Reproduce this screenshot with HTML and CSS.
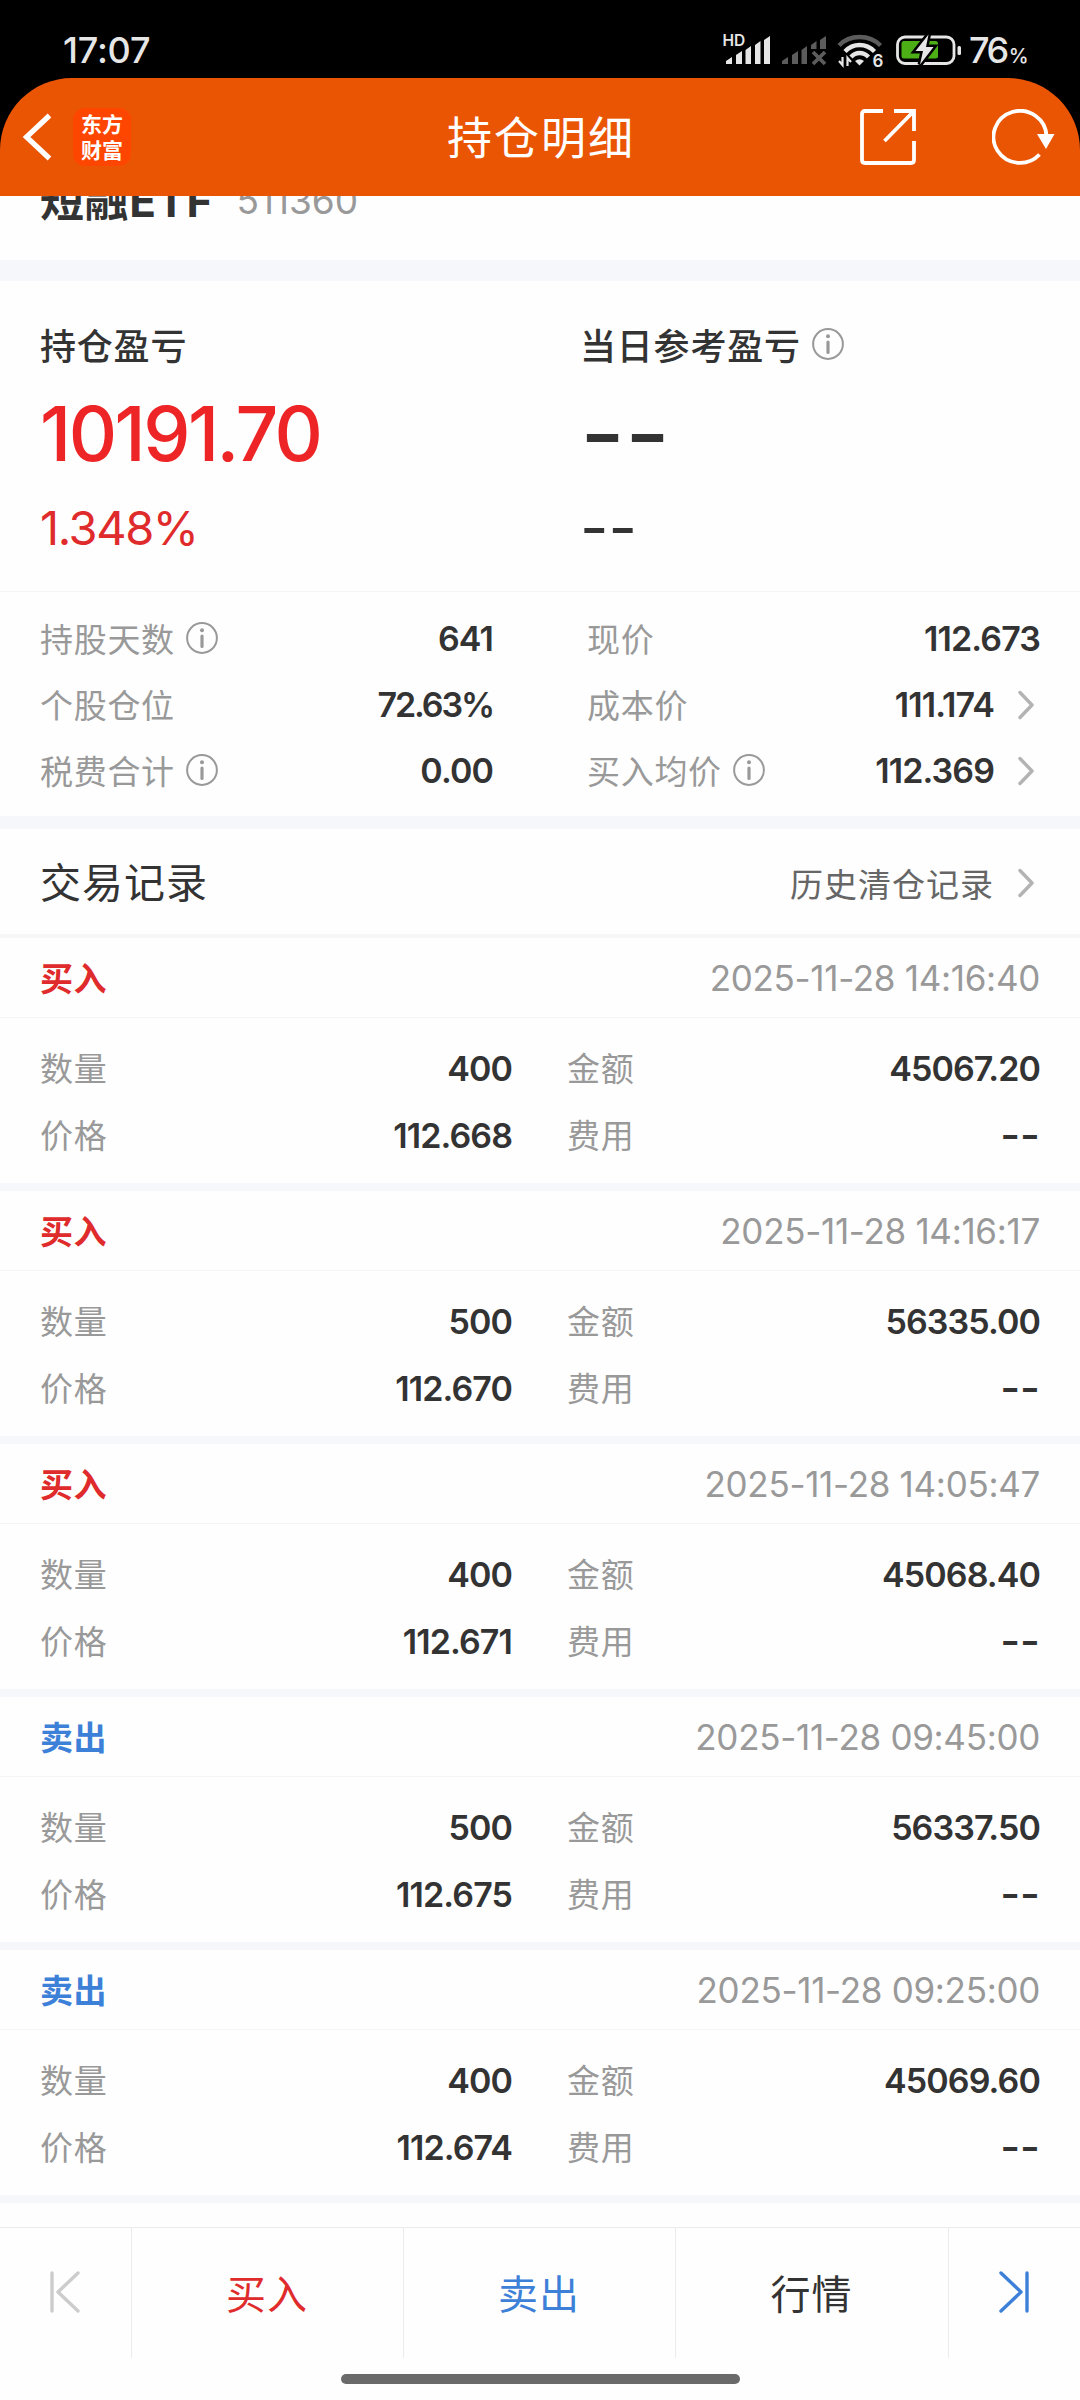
FILE: index.html
```
<!DOCTYPE html>
<html lang="zh-CN">
<head>
    <meta charset="UTF-8">
    <meta name="viewport" content="width=device-width, initial-scale=1.0">
    <title>持仓明细</title>
    <link rel="stylesheet" href="styles.css">
</head>
<body>
    <!-- shared icons -->
    <svg class="sprite" width="0" height="0">
        <symbol id="info" viewBox="0 0 32 32">
            <circle cx="16" cy="16" r="14.9" fill="none" stroke="#999" stroke-width="2"/>
            <circle cx="16" cy="8.3" r="2" fill="#999"/>
            <path d="M16 14v10.5" stroke="#999" stroke-width="3.2" stroke-linecap="round"/>
        </symbol>
        <symbol id="more" viewBox="0 0 16 30">
            <path d="M2 2.500L14 15L2 27.500" fill="none" stroke="#b3b3b3" stroke-width="3.400" stroke-linecap="round" stroke-linejoin="round"/>
        </symbol>
    </svg>

    <div class="statusbar">
        <div class="time">17:07</div>
        <svg class="signals" width="240" height="40" viewBox="722 30 240 40">
            <text x="722.500" y="46" class="hd">HD</text>
            <g fill="#e6e6e6">
                <path d="M726 61l6-4v7h-6zM736 55l6-4v13h-6zM745.500 50l5.500-4v18h-5.500zM755 45l5.500-4v23H755zM764 40l6-4v28h-6z"/>
            </g>
            <g fill="#5c5c5c">
                <path d="M782 61l6-4v7h-6zM792 55l6-4v13h-6zM801.500 50l5.500-4v18h-5.500zM811 45l5.500-4v8H811zM820 40l6-4v13h-6z"/>
                <path d="M813 52l12 12M825 52l-12 12" stroke="#5c5c5c" stroke-width="3.800"/>
            </g>
            <g fill="none" stroke-width="4.300">
                <path d="M839 45.500Q847 37 859.600 37T880.500 45.500" stroke="#5c5c5c"/>
                <path d="M845 51.500Q851 45 859.600 45T874.500 51.500" stroke="#e6e6e6"/>
                <path d="M851 57Q854.500 53 859.600 53T868.500 57" stroke="#e6e6e6"/>
            </g>
            <path d="M855 61q4.500-3.500 9 0l-4.500 4.500z" fill="#e6e6e6"/>
            <path d="M842.500 57v8l-3.500-4M847.500 66v-8l3.500 4" fill="none" stroke="#e6e6e6" stroke-width="2.200"/>
            <text x="872.500" y="67" class="six">6</text>
            <rect x="897.500" y="37" width="56.500" height="26.500" rx="7.500" fill="none" stroke="#e6e6e6" stroke-width="2.800"/>
            <rect x="901.500" y="41" width="36.500" height="17.500" rx="2.500" fill="#4caf16"/>
            <path class="bolt" d="M928.500 34.500L915.500 51h7.500l-3 13.500L933.500 47H926z"/>
            <rect x="957.500" y="46" width="3.500" height="9" rx="1.500" fill="#e6e6e6"/>
        </svg>
        <div class="battery">76<span>%</span></div>
    </div>

    <div class="header">
        <div class="header_left">
            <svg width="32" height="52" viewBox="0 0 32 52"><path d="M27.500 4.500L4.500 26L27.500 47.500" fill="none" stroke="#fff" stroke-width="5.200"/></svg>
            <div class="logo">东方<br>财富</div>
        </div>
        <div class="title">持仓明细</div>
        <div class="header_right">
            <svg width="56" height="56" viewBox="0 0 56 56">
                <path d="M23 2H5Q2 2 2 5V51Q2 54 5 54H51Q54 54 54 51V32M34 2H54V22M54 2L24.500 32" fill="none" stroke="#fff" stroke-width="3.800"/>
            </svg>
            <svg class="refresh" width="64" height="56" viewBox="0 0 64 56">
                <path d="M54.500 27A26.500 26 0 1 0 47.500 45.500" fill="none" stroke="#fff" stroke-width="3.800"/>
                <path d="M45 25h17.500l-8.500 15z" fill="#fff"/>
            </svg>
        </div>
    </div>

    <div class="stock">
        <span class="stock_name">短融ETF</span>
        <span class="stock_code">511360</span>
    </div>

    <div class="profit">
        <div class="profit_col">
            <div class="profit_label">持仓盈亏</div>
            <div class="profit_big red">10191.70</div>
            <div class="profit_small red">1.348%</div>
        </div>
        <div class="profit_col">
            <div class="profit_label">当日参考盈亏<svg class="info"><use href="#info"/></svg></div>
            <div class="profit_big dash">--</div>
            <div class="profit_small dash">--</div>
        </div>
    </div>

    <div class="detail">
        <div class="detail_col">
            <div class="row"><span class="label">持股天数<svg class="info"><use href="#info"/></svg></span><span class="value">641</span></div>
            <div class="row"><span class="label">个股仓位</span><span class="value percent">72.63%</span></div>
            <div class="row"><span class="label">税费合计<svg class="info"><use href="#info"/></svg></span><span class="value">0.00</span></div>
        </div>
        <div class="detail_col">
            <div class="row"><span class="label">现价</span><span class="value">112.673</span></div>
            <div class="row"><span class="label">成本价</span><span class="value">111.174<svg class="more"><use href="#more"/></svg></span></div>
            <div class="row"><span class="label">买入均价<svg class="info"><use href="#info"/></svg></span><span class="value">112.369<svg class="more"><use href="#more"/></svg></span></div>
        </div>
    </div>

    <div class="records_head">
        <div class="records_title">交易记录</div>
        <div class="records_link">历史清仓记录<svg class="more"><use href="#more"/></svg></div>
    </div>

    <div class="record">
        <div class="record_head"><span class="type buy">买入</span><span class="date">2025-11-28 14:16:40</span></div>
        <div class="record_body">
            <div class="row"><span class="label">数量</span><span class="value">400</span></div>
            <div class="row"><span class="label">金额</span><span class="value">45067.20</span></div>
            <div class="row"><span class="label">价格</span><span class="value">112.668</span></div>
            <div class="row"><span class="label">费用</span><span class="value dash">--</span></div>
        </div>
    </div>
    <div class="record">
        <div class="record_head"><span class="type buy">买入</span><span class="date">2025-11-28 14:16:17</span></div>
        <div class="record_body">
            <div class="row"><span class="label">数量</span><span class="value">500</span></div>
            <div class="row"><span class="label">金额</span><span class="value">56335.00</span></div>
            <div class="row"><span class="label">价格</span><span class="value">112.670</span></div>
            <div class="row"><span class="label">费用</span><span class="value dash">--</span></div>
        </div>
    </div>
    <div class="record">
        <div class="record_head"><span class="type buy">买入</span><span class="date">2025-11-28 14:05:47</span></div>
        <div class="record_body">
            <div class="row"><span class="label">数量</span><span class="value">400</span></div>
            <div class="row"><span class="label">金额</span><span class="value">45068.40</span></div>
            <div class="row"><span class="label">价格</span><span class="value">112.671</span></div>
            <div class="row"><span class="label">费用</span><span class="value dash">--</span></div>
        </div>
    </div>
    <div class="record">
        <div class="record_head"><span class="type sell">卖出</span><span class="date">2025-11-28 09:45:00</span></div>
        <div class="record_body">
            <div class="row"><span class="label">数量</span><span class="value">500</span></div>
            <div class="row"><span class="label">金额</span><span class="value">56337.50</span></div>
            <div class="row"><span class="label">价格</span><span class="value">112.675</span></div>
            <div class="row"><span class="label">费用</span><span class="value dash">--</span></div>
        </div>
    </div>
    <div class="record">
        <div class="record_head"><span class="type sell">卖出</span><span class="date">2025-11-28 09:25:00</span></div>
        <div class="record_body">
            <div class="row"><span class="label">数量</span><span class="value">400</span></div>
            <div class="row"><span class="label">金额</span><span class="value">45069.60</span></div>
            <div class="row"><span class="label">价格</span><span class="value">112.674</span></div>
            <div class="row"><span class="label">费用</span><span class="value dash">--</span></div>
        </div>
    </div>

    <div class="tabbar">
        <div class="tab tab_arrow">
            <svg width="30" height="42" viewBox="0 0 30 42"><path d="M2 2V40M28 2L8 21L28 40" fill="none" stroke="#ccc" stroke-width="3.400" stroke-linecap="round" stroke-linejoin="round"/></svg>
        </div>
        <div class="tab buy">买入</div>
        <div class="tab sell">卖出</div>
        <div class="tab">行情</div>
        <div class="tab tab_arrow">
            <svg width="30" height="42" viewBox="0 0 30 42"><path d="M28 2V40M2 2L22 21L2 40" fill="none" stroke="#3d80d8" stroke-width="3.400" stroke-linecap="round" stroke-linejoin="round"/></svg>
        </div>
    </div>
    <div class="home"></div>
</body>
</html>
```
FILE: styles.css
```
* {
    box-sizing: border-box;
}
body {
    margin: 0;
    width: 1080px;
    height: 2400px;
    overflow: hidden;
    background: #fefefe;
    color: #333;
    font-family: Inter, "Noto Sans CJK SC", sans-serif;
    display: flex;
    flex-direction: column;
}
body > div {
    flex-shrink: 0;
}
.sprite {
    position: absolute;
}
.red, .buy {
    color: #df2b2b;
}
.sell {
    color: #3d80d8;
}

/* status bar */
.statusbar {
    height: 78px;
    background: #000;
    color: #e6e6e6;
    display: flex;
    align-items: center;
    padding: 22px 0 0 63px;
    line-height: 56px;
    font-size: 36px;
    font-weight: 500;
}
.time {
    width: 659px;
    letter-spacing: -0.2px;
}
.signals {
    display: block;
}
.hd {
    font-size: 15.500px;
    font-weight: 600;
    fill: #e6e6e6;
}
.six {
    font-size: 17px;
    font-weight: 600;
    fill: #e6e6e6;
}
.bolt {
    fill: #e6e6e6;
    stroke: #000;
    stroke-width: 5px;
    paint-order: stroke;
}
.battery {
    margin-left: 7px;
    letter-spacing: -2.500px;
}
.battery span {
    font-size: 20px;
    line-height: 1;
    margin-left: 2px;
}

/* header */
.header {
    height: 118px;
    background: #ea5504;
    border-radius: 72px 72px 0 0;
    box-shadow: 0 -72px 0 72px #000;
    clip-path: inset(0);
    display: flex;
    align-items: center;
    justify-content: space-between;
    padding: 0 24px 0 22px;
    color: #fff;
    position: relative;
    z-index: 1;
}
.header_left, .header_right {
    flex: 1;
    display: flex;
    align-items: center;
}
.header_right {
    justify-content: flex-end;
}
.refresh {
    margin-left: 76px;
}
.logo {
    width: 58px;
    height: 58px;
    margin-left: 19px;
    border-radius: 12px;
    background: #ff4600;
    font: 700 21px/26px "Noto Sans CJK SC", sans-serif;
    text-align: center;
    padding-top: 2px;
}
.title {
    font-size: 45px;
    letter-spacing: 2px;
    line-height: 60px;
    margin-left: 4px;
    padding-top: 4px;
}

/* scrolled under the header */
.stock {
    height: 112px;
    margin-top: -27px;
    border-bottom: 21px solid #f6f7fa;
    padding-left: 40px;
    line-height: 64px;
}
.stock_name {
    font-size: 44px;
    font-weight: 700;
    letter-spacing: 0.6px;
}
.stock_code {
    font-size: 37px;
    color: #999;
    margin-left: 19px;
    position: relative;
    top: -3px;
}

/* profit */
.profit {
    height: 311px;
    display: flex;
    padding: 34px 0 0 40px;
    border-bottom: 1px solid #f5f5f5;
}
.profit_col {
    width: 540px;
    flex-shrink: 0;
}
.profit_label {
    display: flex;
    align-items: center;
    height: 60px;
    font-size: 36px;
    font-weight: 500;
    letter-spacing: 0.8px;
    margin-top: -1px;
}
.info {
    width: 32px;
    height: 32px;
    margin-left: 11px;
}
.profit_big {
    height: 118px;
    line-height: 120px;
    font-size: 75px;
    letter-spacing: -2.200px;
}
.profit_big.red {
    color: #ee2526;
    font-weight: 500;
    letter-spacing: -2.500px;
}
.profit_big.dash {
    font-size: 98px;
    line-height: 118px;
    letter-spacing: 0;
}
.profit_small {
    height: 70px;
    line-height: 72px;
    font-size: 47px;
    letter-spacing: -1.400px;
}
.profit_small.dash {
    font-size: 62px;
    letter-spacing: 0;
}

/* detail */
.detail {
    height: 238px;
    margin-top: -1px;
    display: flex;
    justify-content: space-between;
    padding: 14px 40px 0;
    border-bottom: 13px solid #f6f7fa;
    border-top: 1px solid #f5f5f5;
}
.detail_col {
    width: 453px;
}
.row {
    height: 66px;
    display: flex;
    align-items: center;
    justify-content: space-between;
}
.label {
    display: flex;
    align-items: center;
    font-size: 33px;
    letter-spacing: 0.7px;
    color: #999;
    padding-bottom: 3px;
}
.value {
    display: flex;
    align-items: center;
    font-size: 34px;
    font-weight: 600;
    letter-spacing: -0.900px;
    padding-bottom: 1px;
}
.value.percent {
    letter-spacing: -2.100px;
}
.value.dash {
    font-size: 43px;
    font-weight: 500;
    letter-spacing: 0;
    line-height: 50px;
    padding-bottom: 3px;
}
.more {
    width: 16px;
    height: 30px;
    margin: 0 6px 0 24px;
}

/* records */
.records_head {
    height: 109px;
    display: flex;
    align-items: center;
    justify-content: space-between;
    padding: 0 40px;
    border-bottom: 4px solid #f7f7f8;
}
.records_title {
    font-size: 41px;
    letter-spacing: 1px;
    padding-bottom: 4px;
}
.records_link {
    display: flex;
    align-items: center;
    font-size: 33px;
    letter-spacing: 1px;
    color: #666;
    padding-top: 2px;
}
.record {
    height: 253px;
    border-bottom: 8px solid #f6f7fa;
}
.record_head {
    height: 80px;
    padding: 0 40px;
    display: flex;
    align-items: center;
    justify-content: space-between;
    border-bottom: 1px solid #f5f5f6;
}
.type {
    font-size: 33px;
    font-weight: 600;
    letter-spacing: 0.5px;
    padding-bottom: 2px;
}
.date {
    font-size: 35px;
    letter-spacing: -0.300px;
    color: #999;
}
.record_body {
    display: grid;
    grid-template-columns: 472px 473px;
    column-gap: 55px;
    padding: 17px 40px 0;
}
.record_body .row {
    height: 67px;
}

/* bottom */
.tabbar {
    margin-top: 24px;
    height: 131px;
    display: grid;
    grid-template-columns: 132px 272px 272px 273px 131px;
    border-top: 1px solid #ebebeb;
}
.tab {
    display: flex;
    align-items: center;
    justify-content: center;
    border-right: 1px solid #ebebeb;
    font-size: 40px;
    letter-spacing: 1px;
    padding: 0 1px 2px 0;
}
.tab:last-child {
    border-right: none;
}
.home {
    width: 399px;
    height: 10px;
    margin: 16px auto 0;
    border-radius: 5px;
    background: #6a6a6a;
}
```
